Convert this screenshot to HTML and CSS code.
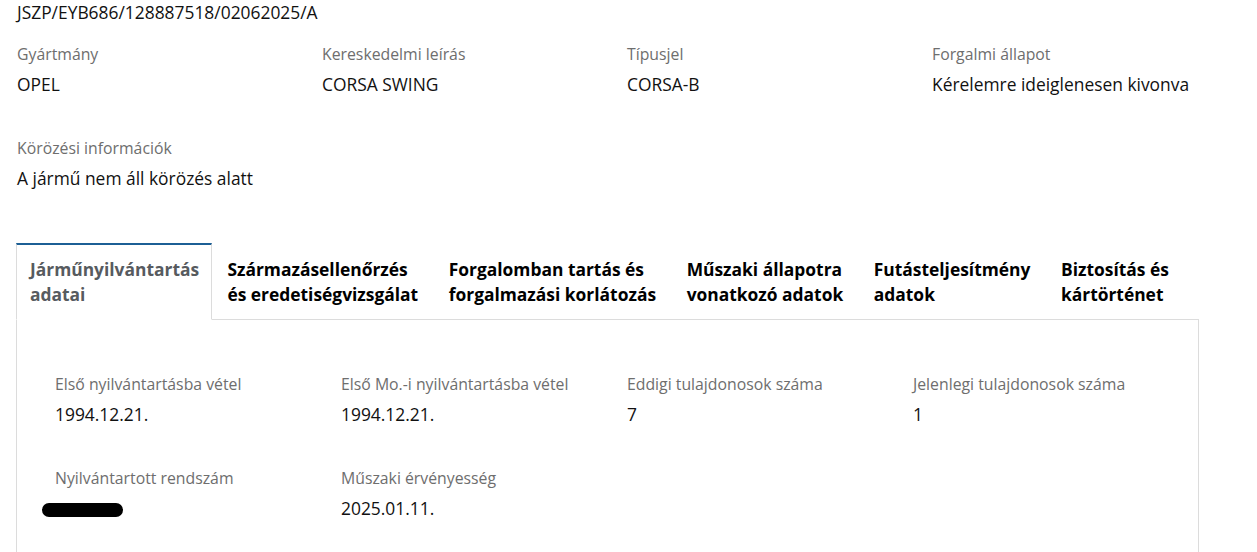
FILE: index.html
```html
<!DOCTYPE html>
<html lang="hu">
<head>
    <meta charset="UTF-8">
    <meta name="viewport" content="width=device-width, initial-scale=1.0">
    <title>Jármű adatok</title>
    <link rel="stylesheet" href="styles.css">
</head>
<body>
    <div class="ref">JSZP/EYB686/128887518/02062025/A</div>

    <div class="info">
        <div class="field">
            <div class="label">Gyártmány</div>
            <div class="value">OPEL</div>
        </div>
        <div class="field">
            <div class="label">Kereskedelmi leírás</div>
            <div class="value">CORSA SWING</div>
        </div>
        <div class="field">
            <div class="label">Típusjel</div>
            <div class="value">CORSA-B</div>
        </div>
        <div class="field">
            <div class="label">Forgalmi állapot</div>
            <div class="value">Kérelemre ideiglenesen kivonva</div>
        </div>
        <div class="field wide">
            <div class="label">Körözési információk</div>
            <div class="value">A jármű nem áll körözés alatt</div>
        </div>
    </div>

    <div class="tabs-box">
        <ul class="tabs">
            <li class="tab active">Járműnyilvántartás<br>adatai</li>
            <li class="tab">Származásellenőrzés<br>és eredetiségvizsgálat</li>
            <li class="tab">Forgalomban tartás és<br>forgalmazási korlátozás</li>
            <li class="tab">Műszaki állapotra<br>vonatkozó adatok</li>
            <li class="tab">Futásteljesítmény<br>adatok</li>
            <li class="tab">Biztosítás és<br>kártörténet</li>
            <li class="tab-fill"></li>
        </ul>
        <div class="panel">
            <div class="panel-grid">
                <div class="field">
                    <div class="label">Első nyilvántartásba vétel</div>
                    <div class="value">1994.12.21.</div>
                </div>
                <div class="field">
                    <div class="label">Első Mo.-i nyilvántartásba vétel</div>
                    <div class="value">1994.12.21.</div>
                </div>
                <div class="field">
                    <div class="label">Eddigi tulajdonosok száma</div>
                    <div class="value">7</div>
                </div>
                <div class="field">
                    <div class="label">Jelenlegi tulajdonosok száma</div>
                    <div class="value">1</div>
                </div>
                <div class="field">
                    <div class="label">Nyilvántartott rendszám</div>
                    <div class="value"><span class="redacted"></span></div>
                </div>
                <div class="field">
                    <div class="label">Műszaki érvényesség</div>
                    <div class="value">2025.01.11.</div>
                </div>
            </div>
        </div>
    </div>
</body>
</html>
```

FILE: styles.css
```css
body {
    margin: 0;
    padding: 0 0 0 17px;
    font-family: "Open Sans", "Noto Sans", sans-serif;
    color: #111;
    background-color: #fff;
}
.ref {
    font-size: 17.4px;
    line-height: 24px;
}
.info {
    display: grid;
    grid-template-columns: repeat(4, 305px);
    row-gap: 40px;
    margin-top: 19px;
}
.wide {
    grid-column: 1 / 3;
}
.label {
    font-size: 15.8px;
    line-height: 22px;
    color: #6e6e6e;
    margin-bottom: 7px;
}
.value {
    font-size: 17.4px;
    line-height: 25px;
}
.tabs-box {
    width: 1183px;
    margin: 52px 0 0 -1px;
}
.tabs {
    display: flex;
    list-style: none;
    margin: 0;
    padding: 0;
}
.tab {
    padding: 12px 15.3px;
    font-size: 17.4px;
    font-weight: bold;
    line-height: 25px;
    color: #000;
    border-top: 2px solid transparent;
    border-bottom: 1px solid #dcdcdc;
    white-space: nowrap;
}
.tab.active {
    padding: 12px 12px 12px 13px;
    color: #575b5f;
    border-top-color: #1c5f95;
    border-left: 1px solid #dcdcdc;
    border-right: 1px solid #dcdcdc;
    border-bottom-color: transparent;
}
.tab-fill {
    flex: 1;
    border-bottom: 1px solid #dcdcdc;
}
.panel {
    border-left: 1px solid #dcdcdc;
    border-right: 1px solid #dcdcdc;
    padding: 53px 0 40px 38px;
}
.panel-grid {
    display: grid;
    grid-template-columns: repeat(4, 286px);
    row-gap: 40px;
}
.redacted {
    display: inline-block;
    width: 81px;
    height: 14px;
    margin-left: -13px;
    background-color: #000;
    border-radius: 8px;
    vertical-align: middle;
}
```
